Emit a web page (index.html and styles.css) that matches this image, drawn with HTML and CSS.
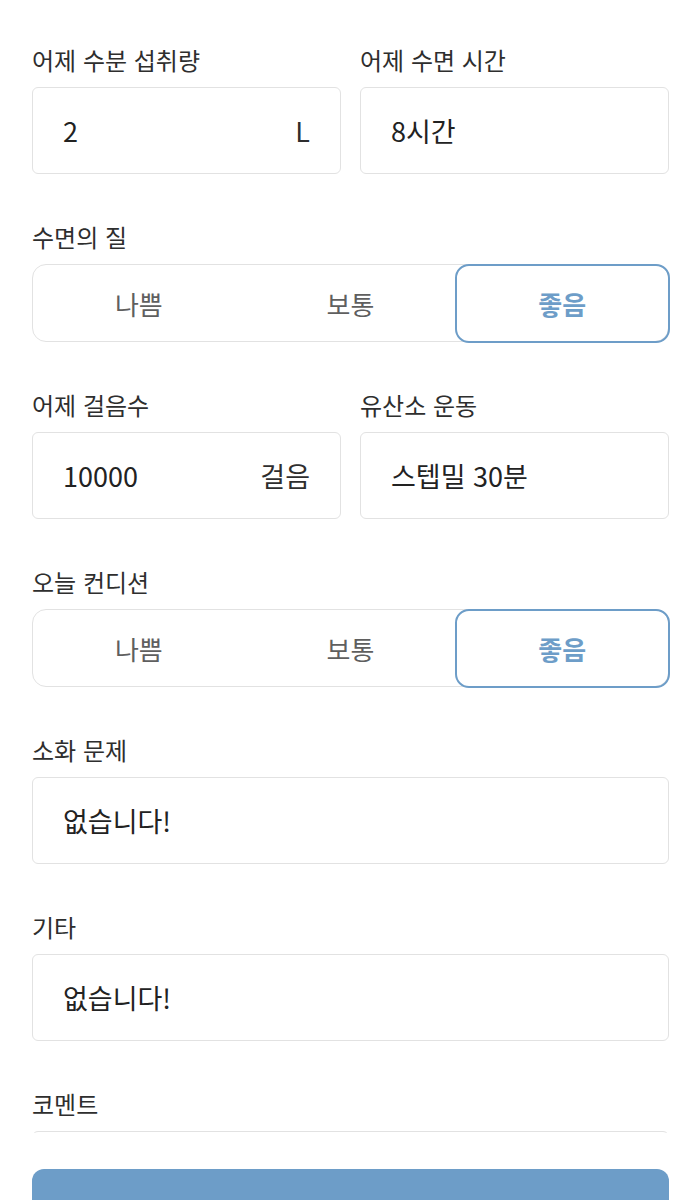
FILE: index.html
```html
<!DOCTYPE html>
<html lang="ko">
<head>
  <meta charset="utf-8" />
  <title>오늘의 기록</title>
  <meta name="viewport" content="width=device-width, initial-scale=1" />
  <link rel="stylesheet" href="styles.css">
</head>
<body>
  <main class="scroll">
    <div class="form">
      <div class="row">
        <div class="field">
          <p class="label">어제 수분 섭취량</p>
          <div class="input"><span>2</span><span class="unit">L</span></div>
        </div>
        <div class="field">
          <p class="label">어제 수면 시간</p>
          <div class="input"><span>8시간</span></div>
        </div>
      </div>

      <div class="field">
        <p class="label">수면의 질</p>
        <div class="segment">
          <button class="seg-btn">나쁨</button>
          <button class="seg-btn">보통</button>
          <button class="seg-btn active">좋음</button>
        </div>
      </div>

      <div class="row">
        <div class="field">
          <p class="label">어제 걸음수</p>
          <div class="input"><span>10000</span><span class="unit">걸음</span></div>
        </div>
        <div class="field">
          <p class="label">유산소 운동</p>
          <div class="input"><span>스텝밀 30분</span></div>
        </div>
      </div>

      <div class="field">
        <p class="label">오늘 컨디션</p>
        <div class="segment">
          <button class="seg-btn">나쁨</button>
          <button class="seg-btn">보통</button>
          <button class="seg-btn active">좋음</button>
        </div>
      </div>

      <div class="field">
        <p class="label">소화 문제</p>
        <div class="input"><span>없습니다!</span></div>
      </div>

      <div class="field">
        <p class="label">기타</p>
        <div class="input"><span>없습니다!</span></div>
      </div>

      <div class="field">
        <p class="label">코멘트</p>
        <div class="input textarea"></div>
      </div>
    </div>
  </main>

  <footer class="footer">
    <button class="submit"></button>
  </footer>
</body>
</html>
```

FILE: styles.css
```css
:root {
  --text: #222222;
  --label: #2e2e2e;
  --sub: #5f5f5f;
  --border: #e2e2e2;
  --blue: #6d9dc8;
}

* { box-sizing: border-box; margin: 0; padding: 0; }

body {
  font-family: "Noto Sans CJK KR", "Noto Sans", sans-serif;
  background: #ffffff;
  color: var(--text);
  width: 700px;
  height: 1200px;
  overflow: hidden;
}

.scroll {
  height: 1133px;
  overflow: hidden;
}

.form {
  padding: 47px 31px 0 32px;
  display: flex;
  flex-direction: column;
  gap: 50px;
}

.row {
  display: grid;
  grid-template-columns: 1fr 1fr;
  column-gap: 19px;
}

.label {
  font-size: 24px;
  line-height: 26px;
  color: var(--label);
  margin-bottom: 14px;
}

.input {
  height: 87px;
  border: 1.5px solid var(--border);
  border-radius: 6px;
  padding: 0 30px;
  display: flex;
  align-items: center;
  justify-content: space-between;
  font-size: 27px;
  color: var(--text);
}

.unit {
  color: var(--label);
}

.textarea {
  height: 140px;
}

.segment {
  height: 78px;
  border: 1.5px solid var(--border);
  border-radius: 14px;
  display: grid;
  grid-template-columns: repeat(3, 1fr);
}

.seg-btn {
  font-family: inherit;
  font-size: 26px;
  color: var(--sub);
  background: none;
  border: none;
  border-radius: 14px;
  margin: -1.5px;
}

.seg-btn.active {
  border: 2px solid var(--blue);
  color: var(--blue);
  font-weight: 700;
}

.footer {
  padding: 36px 31px 0 32px;
}

.submit {
  display: block;
  width: 100%;
  height: 90px;
  border: none;
  border-radius: 12px;
  background: var(--blue);
}
```
